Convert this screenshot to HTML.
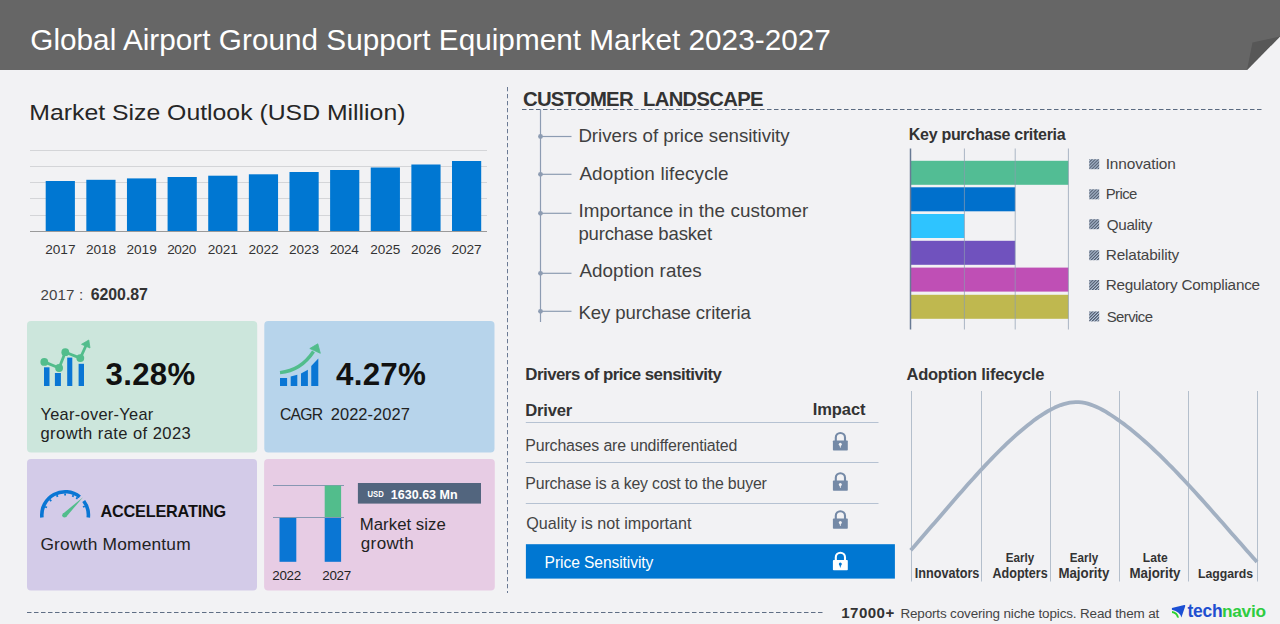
<!DOCTYPE html>
<html><head><meta charset="utf-8"><title>Global Airport Ground Support Equipment Market 2023-2027</title>
<style>html,body{margin:0;padding:0;background:#f2f2f4;}body{width:1280px;height:624px;overflow:hidden;}svg{display:block;font-family:"Liberation Sans",sans-serif;}</style>
</head><body>
<svg width="1280" height="624" viewBox="0 0 1280 624">
<rect x="0" y="0" width="1280" height="624" fill="#f2f2f4"/>
<polygon points="0,0 1280,0 1280,36.5 1247,70 0,70" fill="#666666"/>
<polygon points="1252.5,42.5 1280,36.5 1247,70" fill="#575757"/>
<line x1="30" y1="150.5" x2="487" y2="150.5" stroke="#d4d5d8" stroke-width="1"/>
<line x1="30" y1="166.5" x2="487" y2="166.5" stroke="#d4d5d8" stroke-width="1"/>
<line x1="30" y1="182.5" x2="487" y2="182.5" stroke="#d4d5d8" stroke-width="1"/>
<line x1="30" y1="198.5" x2="487" y2="198.5" stroke="#d4d5d8" stroke-width="1"/>
<line x1="30" y1="215.5" x2="487" y2="215.5" stroke="#d4d5d8" stroke-width="1"/>
<rect x="45.70" y="181" width="29.2" height="50.00" fill="#0077d2"/>
<rect x="86.33" y="179.8" width="29.2" height="51.20" fill="#0077d2"/>
<rect x="126.96" y="178.4" width="29.2" height="52.60" fill="#0077d2"/>
<rect x="167.59" y="177" width="29.2" height="54.00" fill="#0077d2"/>
<rect x="208.22" y="175.7" width="29.2" height="55.30" fill="#0077d2"/>
<rect x="248.85" y="174.3" width="29.2" height="56.70" fill="#0077d2"/>
<rect x="289.48" y="172" width="29.2" height="59.00" fill="#0077d2"/>
<rect x="330.11" y="170" width="29.2" height="61.00" fill="#0077d2"/>
<rect x="370.74" y="167.5" width="29.2" height="63.50" fill="#0077d2"/>
<rect x="411.37" y="164.5" width="29.2" height="66.50" fill="#0077d2"/>
<rect x="452.00" y="161" width="29.2" height="70.00" fill="#0077d2"/>
<line x1="30" y1="231.5" x2="487" y2="231.5" stroke="#9a9a9a" stroke-width="1"/>
<rect x="27" y="321" width="230.2" height="131.6" rx="4" fill="#cce6dc"/>
<rect x="264.3" y="321" width="230.2" height="131.6" rx="4" fill="#b7d4eb"/>
<rect x="27" y="459" width="230" height="131.6" rx="4" fill="#d3cbe8"/>
<rect x="264.1" y="459" width="230.7" height="131.6" rx="4" fill="#e7cce4"/>
<rect x="44" y="367.3" width="5.50" height="18.70" fill="#0a76d4"/>
<rect x="54.9" y="373" width="6.00" height="13.00" fill="#0a76d4"/>
<rect x="67.2" y="357.6" width="5.10" height="28.40" fill="#0a76d4"/>
<rect x="78.6" y="363.8" width="5.40" height="22.20" fill="#0a76d4"/>
<polyline points="44.3,361.9 59.1,368 65.3,352.2 80.3,358.1 86.5,344.5" fill="none" stroke="#52bd8c" stroke-width="2.8" stroke-linejoin="round"/>
<circle cx="44.3" cy="361.9" r="3.9" fill="#52bd8c"/>
<circle cx="59.1" cy="368" r="3.9" fill="#52bd8c"/>
<circle cx="65.3" cy="352.2" r="3.9" fill="#52bd8c"/>
<circle cx="80.3" cy="358.1" r="3.9" fill="#52bd8c"/>
<polygon points="88.8,340 90,348 81.5,344.3" fill="#52bd8c" stroke="#52bd8c" stroke-width="0.8" stroke-linejoin="round"/>
<polygon points="280,378 287.1,378 287.1,386 280,386" fill="#0a76d4"/>
<polygon points="290.7,376.5 297.3,374.7 297.3,386 290.7,386" fill="#0a76d4"/>
<polygon points="301,373.4 307.9,369.7 307.9,386 301,386" fill="#0a76d4"/>
<polygon points="311.25,365.9 318.3,358.4 318.3,386 311.25,386" fill="#0a76d4"/>
<path d="M280,372.6 Q301,370.5 313.5,351.5" fill="none" stroke="#52bd8c" stroke-width="3.4"/>
<polygon points="317.8,343.8 320.3,353.3 309.8,348.5" fill="#52bd8c" stroke="#52bd8c" stroke-width="0.8" stroke-linejoin="round"/>
<path d="M41.93,517.44 A23.3,23.3 0 0 1 79.76,496.89 M83.71,500.98 A23.3,23.3 0 0 1 88.27,517.44" fill="none" stroke="#0a76d4" stroke-width="3.6"/>
<line x1="45.14" y1="506.73" x2="46.99" y2="507.50" stroke="#0a76d4" stroke-width="1.8"/>
<line x1="49.83" y1="499.73" x2="51.24" y2="501.14" stroke="#0a76d4" stroke-width="1.8"/>
<line x1="56.83" y1="495.04" x2="57.60" y2="496.89" stroke="#0a76d4" stroke-width="1.8"/>
<line x1="65.10" y1="493.40" x2="65.10" y2="495.40" stroke="#0a76d4" stroke-width="1.8"/>
<line x1="73.37" y1="495.04" x2="72.60" y2="496.89" stroke="#0a76d4" stroke-width="1.8"/>
<line x1="77.49" y1="497.31" x2="76.34" y2="498.94" stroke="#0a76d4" stroke-width="1.8"/>
<line x1="84.83" y1="506.21" x2="83.01" y2="507.03" stroke="#0a76d4" stroke-width="1.8"/>
<polygon points="66.1,516.95 62.9,513.65 83,497.3" fill="#52bd8c"/><circle cx="64.5" cy="515.3" r="2.3" fill="#52bd8c"/>
<line x1="273" y1="485.5" x2="344" y2="485.5" stroke="#8797b2" stroke-width="1"/>
<rect x="324.7" y="485.5" width="16.4" height="32" fill="#52bd8c"/>
<rect x="279.5" y="517.3" width="16.8" height="44.5" fill="#0a76d4"/>
<rect x="324.7" y="517.3" width="16.4" height="44.5" fill="#0a76d4"/>
<line x1="273" y1="517.5" x2="344" y2="517.5" stroke="#8797b2" stroke-width="1"/>
<rect x="357.9" y="483" width="123.1" height="20.6" fill="#52657e"/>
<line x1="507.5" y1="87" x2="507.5" y2="593" stroke="#6b7a94" stroke-width="1" stroke-dasharray="4.3,2.7"/>
<line x1="522" y1="109.5" x2="1262" y2="109.5" stroke="#5a6a80" stroke-width="1" stroke-dasharray="4.5,2.5"/>
<line x1="27" y1="612.5" x2="823" y2="612.5" stroke="#5f6e85" stroke-width="1" stroke-dasharray="4.5,2.5"/>
<line x1="540.5" y1="109.5" x2="540.5" y2="322" stroke="#8d9cb2" stroke-width="1.2"/>
<line x1="540.5" y1="136.5" x2="571.5" y2="136.5" stroke="#8d9cb2" stroke-width="1.2"/>
<circle cx="540.5" cy="136.5" r="2.4" fill="#8d9cb2"/>
<line x1="540.5" y1="174.3" x2="571.5" y2="174.3" stroke="#8d9cb2" stroke-width="1.2"/>
<circle cx="540.5" cy="174.3" r="2.4" fill="#8d9cb2"/>
<line x1="540.5" y1="213.3" x2="571.5" y2="213.3" stroke="#8d9cb2" stroke-width="1.2"/>
<circle cx="540.5" cy="213.3" r="2.4" fill="#8d9cb2"/>
<line x1="540.5" y1="273.3" x2="571.5" y2="273.3" stroke="#8d9cb2" stroke-width="1.2"/>
<circle cx="540.5" cy="273.3" r="2.4" fill="#8d9cb2"/>
<line x1="540.5" y1="311.3" x2="571.5" y2="311.3" stroke="#8d9cb2" stroke-width="1.2"/>
<circle cx="540.5" cy="311.3" r="2.4" fill="#8d9cb2"/>
<rect x="910.5" y="160.8" width="157.9" height="24" fill="#52bd94"/>
<rect x="910.5" y="187.3" width="104.7" height="24" fill="#0070cc"/>
<rect x="910.5" y="214" width="53.9" height="24" fill="#2ec4ff"/>
<rect x="910.5" y="240.8" width="104.7" height="24" fill="#7052be"/>
<rect x="910.5" y="267.6" width="157.9" height="24" fill="#bf4fb5"/>
<rect x="910.5" y="294.8" width="157.9" height="24" fill="#bfb84f"/>
<line x1="964.4" y1="148.5" x2="964.4" y2="329.5" stroke="#8c9bb0" stroke-opacity="0.7" stroke-width="1"/>
<line x1="1015.2" y1="148.5" x2="1015.2" y2="329.5" stroke="#8c9bb0" stroke-opacity="0.7" stroke-width="1"/>
<line x1="1068.4" y1="148.5" x2="1068.4" y2="329.5" stroke="#8c9bb0" stroke-opacity="0.7" stroke-width="1"/>
<line x1="910.5" y1="148.5" x2="910.5" y2="329.5" stroke="#687a94" stroke-width="1.5"/>
<defs><pattern id="hat" patternUnits="userSpaceOnUse" width="2.2" height="2.2" patternTransform="rotate(45)"><rect width="2.2" height="2.2" fill="#b8c8de"/><rect width="1.2" height="2.2" fill="#4f5a6c"/></pattern></defs>
<rect x="1089.2" y="159.2" width="10" height="10" fill="url(#hat)"/>
<rect x="1089.2" y="189.3" width="10" height="10" fill="url(#hat)"/>
<rect x="1089.2" y="219.2" width="10" height="10" fill="url(#hat)"/>
<rect x="1089.2" y="250.2" width="10" height="10" fill="url(#hat)"/>
<rect x="1089.2" y="280" width="10" height="10" fill="url(#hat)"/>
<rect x="1089.2" y="311.4" width="10" height="10" fill="url(#hat)"/>
<line x1="525.8" y1="422.5" x2="878.5" y2="422.5" stroke="#b6c2d2" stroke-width="1"/>
<line x1="525.8" y1="462.5" x2="878.5" y2="462.5" stroke="#b6c2d2" stroke-width="1"/>
<line x1="525.8" y1="503.5" x2="878.5" y2="503.5" stroke="#b6c2d2" stroke-width="1"/>
<rect x="525.9" y="544.2" width="369" height="34.4" fill="#0077d2"/>
<path d="M835.8,441 V437.6 A4.6,4.6 0 0 1 845.0,437.6 V441" fill="none" stroke="#7489a6" stroke-width="2.1"/><rect x="832.9" y="440.4" width="14.9" height="10.1" rx="0.8" fill="#7489a6"/><circle cx="840.3" cy="444.3" r="1.5" fill="#f2f2f4"/><polygon points="839.5,444.5 841.1,444.5 840.6,447.8 840.0,447.8" fill="#f2f2f4"/>
<path d="M835.8,481.2 V477.8 A4.6,4.6 0 0 1 845.0,477.8 V481.2" fill="none" stroke="#7489a6" stroke-width="2.1"/><rect x="832.9" y="480.59999999999997" width="14.9" height="10.1" rx="0.8" fill="#7489a6"/><circle cx="840.3" cy="484.5" r="1.5" fill="#f2f2f4"/><polygon points="839.5,484.7 841.1,484.7 840.6,488.0 840.0,488.0" fill="#f2f2f4"/>
<path d="M835.8,519.2 V515.8 A4.6,4.6 0 0 1 845.0,515.8 V519.2" fill="none" stroke="#7489a6" stroke-width="2.1"/><rect x="832.9" y="518.6" width="14.9" height="10.1" rx="0.8" fill="#7489a6"/><circle cx="840.3" cy="522.5" r="1.5" fill="#f2f2f4"/><polygon points="839.5,522.7 841.1,522.7 840.6,526.0 840.0,526.0" fill="#f2f2f4"/>
<path d="M835.8,560.7 V557.3000000000001 A4.6,4.6 0 0 1 845.0,557.3000000000001 V560.7" fill="none" stroke="#ffffff" stroke-width="2.1"/><rect x="832.9" y="560.1" width="14.9" height="10.1" rx="0.8" fill="#ffffff"/><circle cx="840.3" cy="564.0" r="1.5" fill="#0077d2"/><polygon points="839.5,564.2 841.1,564.2 840.6,567.5 840.0,567.5" fill="#0077d2"/>
<line x1="911.5" y1="391" x2="911.5" y2="581.5" stroke="#b4bfcc" stroke-width="1"/>
<line x1="981.5" y1="391" x2="981.5" y2="581.5" stroke="#b4bfcc" stroke-width="1"/>
<line x1="1050.5" y1="391" x2="1050.5" y2="581.5" stroke="#b4bfcc" stroke-width="1"/>
<line x1="1119.5" y1="391" x2="1119.5" y2="581.5" stroke="#b4bfcc" stroke-width="1"/>
<line x1="1188.5" y1="391" x2="1188.5" y2="581.5" stroke="#b4bfcc" stroke-width="1"/>
<line x1="1257.5" y1="391" x2="1257.5" y2="581.5" stroke="#b4bfcc" stroke-width="1"/>
<path d="M910.7,550.3 L913.7,546.9 L916.7,543.5 L919.7,540.0 L922.7,536.6 L925.7,533.1 L928.7,529.6 L931.7,526.1 L934.7,522.7 L937.7,519.2 L940.7,515.7 L943.7,512.2 L946.7,508.7 L949.7,505.2 L952.7,501.7 L955.7,498.3 L958.7,494.8 L961.7,491.4 L964.7,488.0 L967.7,484.6 L970.7,481.3 L973.7,477.9 L976.7,474.6 L979.7,471.3 L982.7,468.1 L985.7,464.9 L988.7,461.7 L991.7,458.6 L994.7,455.5 L997.7,452.5 L1000.7,449.5 L1003.7,446.6 L1006.7,443.7 L1009.7,440.9 L1012.7,438.1 L1015.7,435.4 L1018.7,432.8 L1021.7,430.2 L1024.7,427.7 L1027.7,425.3 L1030.7,422.9 L1033.7,420.6 L1036.7,418.4 L1039.7,416.3 L1042.7,414.3 L1045.7,412.5 L1048.7,410.7 L1051.7,409.1 L1054.7,407.6 L1057.7,406.3 L1060.7,405.1 L1063.7,404.1 L1066.7,403.3 L1069.7,402.7 L1072.7,402.3 L1075.7,402.1 L1078.7,402.2 L1081.7,402.4 L1084.7,402.9 L1087.7,403.6 L1090.7,404.6 L1093.7,405.7 L1096.7,407.0 L1099.7,408.4 L1102.7,410.0 L1105.7,411.7 L1108.7,413.6 L1111.7,415.5 L1114.7,417.5 L1117.7,419.6 L1120.7,421.7 L1123.7,423.9 L1126.7,426.2 L1129.7,428.6 L1132.7,431.0 L1135.7,433.5 L1138.7,436.0 L1141.7,438.6 L1144.7,441.2 L1147.7,443.9 L1150.7,446.7 L1153.7,449.5 L1156.7,452.3 L1159.7,455.2 L1162.7,458.2 L1165.7,461.1 L1168.7,464.2 L1171.7,467.2 L1174.7,470.3 L1177.7,473.4 L1180.7,476.6 L1183.7,479.8 L1186.7,483.0 L1189.7,486.2 L1192.7,489.5 L1195.7,492.8 L1198.7,496.1 L1201.7,499.4 L1204.7,502.8 L1207.7,506.1 L1210.7,509.5 L1213.7,512.9 L1216.7,516.3 L1219.7,519.7 L1222.7,523.1 L1225.7,526.5 L1228.7,530.0 L1231.7,533.4 L1234.7,536.8 L1237.7,540.2 L1240.7,543.6 L1243.7,547.0 L1246.7,550.4 L1249.7,553.8 L1252.7,557.2 L1255.7,560.5 L1257.0,562.0" fill="none" stroke="#a2b0c2" stroke-width="3.8" stroke-linejoin="round"/>
<path d="M1171.9,608.1 L1184.2,605.1 Q1185.6,604.9 1185.2,606.3 L1181.4,617.6 Q1180.2,611.5 1171.9,609.7 Z" fill="#1b4fd4"/>
<path d="M1172,611.1 Q1177.8,611.8 1179,617.8 L1177,617.6 Q1176.2,613.6 1172,613.1 Z" fill="#2bd12e"/>
<text x="30.25" y="49.50" font-size="29.71" letter-spacing="0.025" fill="#ffffff">Global Airport Ground Support Equipment Market 2023-2027</text>
<text x="29.36" y="119.50" font-size="21.80" textLength="376.07" lengthAdjust="spacingAndGlyphs" fill="#262626">Market Size Outlook (USD Million)</text>
<text x="45.30" y="253.60" font-size="13.65" letter-spacing="-0.053" fill="#333333">2017</text>
<text x="85.92" y="253.60" font-size="13.65" letter-spacing="-0.053" fill="#333333">2018</text>
<text x="126.54" y="253.60" font-size="13.65" letter-spacing="-0.053" fill="#333333">2019</text>
<text x="167.16" y="253.60" font-size="13.58" letter-spacing="-0.352" fill="#333333">2020</text>
<text x="207.78" y="253.60" font-size="13.65" letter-spacing="-0.053" fill="#333333">2021</text>
<text x="248.40" y="253.60" font-size="13.65" letter-spacing="-0.053" fill="#333333">2022</text>
<text x="289.02" y="253.60" font-size="13.65" letter-spacing="-0.053" fill="#333333">2023</text>
<text x="329.64" y="253.60" font-size="13.58" letter-spacing="-0.352" fill="#333333">2024</text>
<text x="370.26" y="253.60" font-size="13.58" letter-spacing="-0.018" fill="#333333">2025</text>
<text x="410.88" y="253.60" font-size="13.65" letter-spacing="-0.053" fill="#333333">2026</text>
<text x="451.50" y="253.60" font-size="13.65" letter-spacing="-0.053" fill="#333333">2027</text>
<text x="40.40" y="299.60" font-size="15.14" letter-spacing="0.150" fill="#444444">2017 :</text>
<text x="90.80" y="299.60" font-size="15.92" font-weight="bold" letter-spacing="-0.075" fill="#333333">6200.87</text>
<text x="105.60" y="384.80" font-size="31.18" font-weight="bold" letter-spacing="0.283" fill="#111111">3.28%</text>
<text x="40.50" y="420.00" font-size="16.36" letter-spacing="0.302" fill="#222222">Year-over-Year</text>
<text x="40.50" y="439.40" font-size="16.54" letter-spacing="0.431" fill="#222222">growth rate of 2023</text>
<text x="336.00" y="384.80" font-size="31.35" font-weight="bold" letter-spacing="0.249" fill="#111111">4.27%</text>
<text x="280.00" y="419.80" font-size="15.75" letter-spacing="-0.765" fill="#222222">CAGR</text>
<text x="330.80" y="419.80" font-size="16.47" letter-spacing="0.038" fill="#222222">2022-2027</text>
<text x="100.50" y="516.60" font-size="16.25" font-weight="bold" letter-spacing="-0.205" fill="#111111">ACCELERATING</text>
<text x="40.40" y="549.80" font-size="17.35" letter-spacing="0.199" fill="#222222">Growth Momentum</text>
<text x="272.30" y="579.80" font-size="13.43" letter-spacing="-0.323" fill="#222222">2022</text>
<text x="322.30" y="579.80" font-size="13.43" letter-spacing="-0.323" fill="#222222">2027</text>
<text x="367.50" y="496.90" font-size="9.88" font-weight="bold" textLength="16.20" lengthAdjust="spacingAndGlyphs" fill="#ffffff">USD</text>
<text x="390.80" y="499.30" font-size="12.51" font-weight="bold" letter-spacing="0.014" fill="#ffffff">1630.63 Mn</text>
<text x="359.80" y="530.00" font-size="16.75" letter-spacing="0.028" fill="#222222">Market size</text>
<text x="360.80" y="549.30" font-size="17.05" letter-spacing="0.343" fill="#222222">growth</text>
<text x="523.00" y="105.50" font-size="20.33" font-weight="bold" letter-spacing="-0.771" fill="#333333">CUSTOMER</text>
<text x="643.10" y="105.50" font-size="20.24" font-weight="bold" letter-spacing="-0.689" fill="#333333">LANDSCAPE</text>
<text x="578.40" y="141.80" font-size="18.70" letter-spacing="-0.022" fill="#404040">Drivers of price sensitivity</text>
<text x="579.40" y="179.80" font-size="18.91" letter-spacing="0.122" fill="#404040">Adoption lifecycle</text>
<text x="578.40" y="216.80" font-size="18.84" letter-spacing="0.073" fill="#404040">Importance in the customer</text>
<text x="578.40" y="239.70" font-size="18.54" letter-spacing="-0.159" fill="#404040">purchase basket</text>
<text x="579.40" y="276.80" font-size="18.83" letter-spacing="0.068" fill="#404040">Adoption rates</text>
<text x="578.40" y="318.80" font-size="18.60" letter-spacing="-0.106" fill="#404040">Key purchase criteria</text>
<text x="908.80" y="139.60" font-size="16.03" font-weight="bold" letter-spacing="-0.305" fill="#333333">Key purchase criteria</text>
<text x="1105.70" y="169.00" font-size="15.42" letter-spacing="-0.103" fill="#444444">Innovation</text>
<text x="1105.70" y="198.70" font-size="14.91" letter-spacing="-0.568" fill="#444444">Price</text>
<text x="1106.70" y="229.70" font-size="15.21" letter-spacing="-0.286" fill="#444444">Quality</text>
<text x="1105.70" y="259.70" font-size="15.35" letter-spacing="-0.137" fill="#444444">Relatability</text>
<text x="1105.70" y="289.70" font-size="15.27" letter-spacing="-0.214" fill="#444444">Regulatory Compliance</text>
<text x="1106.70" y="321.60" font-size="14.90" letter-spacing="-0.562" fill="#444444">Service</text>
<text x="525.30" y="380.00" font-size="16.83" font-weight="bold" letter-spacing="-0.510" fill="#333333">Drivers of price sensitivity</text>
<text x="525.30" y="415.50" font-size="16.62" font-weight="bold" letter-spacing="-0.210" fill="#333333">Driver</text>
<text x="812.80" y="415.30" font-size="16.49" font-weight="bold" letter-spacing="-0.088" fill="#333333">Impact</text>
<text x="525.30" y="450.70" font-size="15.92" letter-spacing="-0.148" fill="#444444">Purchases are undifferentiated</text>
<text x="525.30" y="488.50" font-size="15.89" letter-spacing="-0.161" fill="#444444">Purchase is a key cost to the buyer</text>
<text x="526.30" y="528.90" font-size="16.14" letter-spacing="0.012" fill="#444444">Quality is not important</text>
<text x="544.60" y="567.70" font-size="15.59" letter-spacing="-0.072" fill="#ffffff">Price Sensitivity</text>
<text x="906.50" y="380.00" font-size="16.52" font-weight="bold" letter-spacing="-0.256" fill="#333333">Adoption lifecycle</text>
<text x="914.70" y="577.90" font-size="13.77" font-weight="bold" textLength="64.68" lengthAdjust="spacingAndGlyphs" fill="#333333">Innovators</text>
<text x="1005.80" y="561.60" font-size="13.46" font-weight="bold" textLength="28.44" lengthAdjust="spacingAndGlyphs" fill="#333333">Early</text>
<text x="992.50" y="577.80" font-size="13.74" font-weight="bold" textLength="55.17" lengthAdjust="spacingAndGlyphs" fill="#333333">Adopters</text>
<text x="1069.70" y="561.60" font-size="13.46" font-weight="bold" textLength="28.44" lengthAdjust="spacingAndGlyphs" fill="#333333">Early</text>
<text x="1058.40" y="577.80" font-size="13.97" font-weight="bold" textLength="50.97" lengthAdjust="spacingAndGlyphs" fill="#333333">Majority</text>
<text x="1142.80" y="561.50" font-size="13.61" font-weight="bold" textLength="24.81" lengthAdjust="spacingAndGlyphs" fill="#333333">Late</text>
<text x="1129.50" y="577.50" font-size="13.97" font-weight="bold" textLength="50.97" lengthAdjust="spacingAndGlyphs" fill="#333333">Majority</text>
<text x="1198.00" y="577.50" font-size="13.58" font-weight="bold" textLength="55.19" lengthAdjust="spacingAndGlyphs" fill="#333333">Laggards</text>
<text x="841.30" y="617.70" font-size="15.09" font-weight="bold" letter-spacing="0.434" fill="#333333">17000+</text>
<text x="900.40" y="618.00" font-size="13.46" letter-spacing="-0.140" fill="#444444">Reports covering niche topics. Read them at</text>
<text x="1187.60" y="617.40" font-size="17.47" font-weight="bold" letter-spacing="-0.308" fill="#1f4fd0">tech</text>
<text x="1222.00" y="617.40" font-size="17.25" font-weight="bold" letter-spacing="-0.271" fill="#2ecc40">navio</text>
</svg>
</body></html>
